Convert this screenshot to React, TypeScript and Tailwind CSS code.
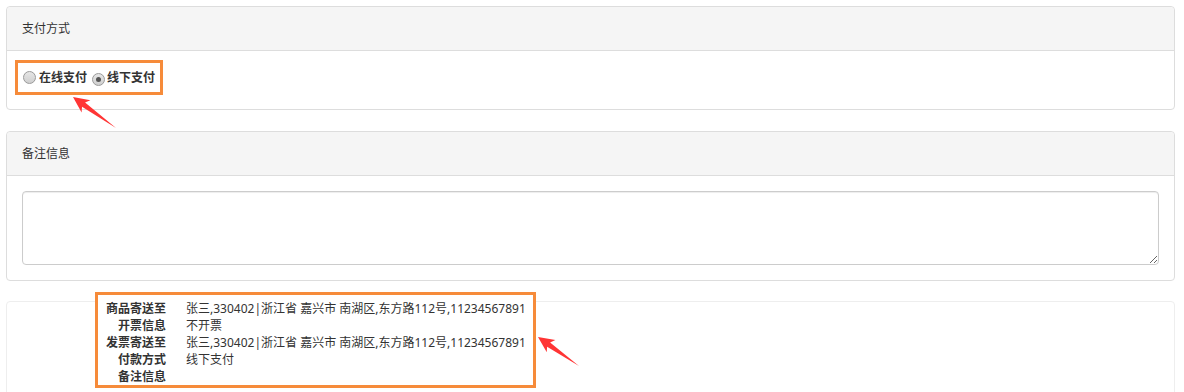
import React from "react";

const FONT = '"Noto Sans", "Noto Sans CJK SC", sans-serif';

function Radio({ checked }: { checked?: boolean }) {
  return (
    <span className="inline-flex h-[13px] w-[13px] shrink-0 items-center justify-center rounded-full border border-[#9a9a9a] bg-gradient-to-b from-[#e6e6e6] to-[#cfcfcf]">
      {checked && <span className="h-[5px] w-[5px] rounded-full bg-[#555]" />}
    </span>
  );
}

function Arrow({ tail, tip }: { tail: [number, number]; tip: [number, number] }) {
  const dx = tip[0] - tail[0];
  const dy = tip[1] - tail[1];
  const L = Math.sqrt(dx * dx + dy * dy);
  const ang = (Math.atan2(dy, dx) * 180) / Math.PI;
  const pts = `0,0 ${L - 13},-2.6 ${L - 16},-7.5 ${L},0 ${L - 16},7.5 ${L - 13},2.6`;
  return (
    <polygon
      points={pts}
      fill="#ff3535"
      transform={`translate(${tail[0]} ${tail[1]}) rotate(${ang})`}
    />
  );
}

const rows: [string, string][] = [
  ["商品寄送至", "张三,330402|浙江省 嘉兴市 南湖区,东方路112号,11234567891"],
  ["开票信息", "不开票"],
  ["发票寄送至", "张三,330402|浙江省 嘉兴市 南湖区,东方路112号,11234567891"],
  ["付款方式", "线下支付"],
  ["备注信息", ""],
];

export default function App() {
  return (
    <div
      className="relative h-[392px] w-[1184px] overflow-hidden bg-white text-[12px] text-[#333]"
      style={{ fontFamily: FONT }}
    >
      <div className="w-[1175px] pl-[6px] pt-[6px]">
        {/* Panel 1 */}
        <div className="rounded-[4px] border border-[#dddddd] bg-white">
          <div className="flex h-[44px] items-center rounded-t-[4px] border-b border-[#dddddd] bg-[#f5f5f5] px-[15px]">
            支付方式
          </div>
          <div className="pb-[14px] pl-[8px] pt-[9px]">
            <div className="flex h-[35px] w-[148px] items-center border-[3px] border-[#f68b3a] pl-[5px] font-bold">
              <Radio />
              <span className="ml-[3px] leading-none">在线支付</span>
              <span className="ml-[5px]">
                <Radio checked />
              </span>
              <span className="ml-[2px] leading-none">线下支付</span>
            </div>
          </div>
        </div>

        {/* Panel 2 */}
        <div className="mt-[21px] rounded-[4px] border border-[#dddddd] bg-white">
          <div className="flex h-[44px] items-center rounded-t-[4px] border-b border-[#dddddd] bg-[#f5f5f5] px-[15px]">
            备注信息
          </div>
          <div className="p-[15px]">
            <textarea className="block h-[74px] w-full rounded-[4px] border border-[#cccccc] shadow-[inset_0_1px_1px_rgba(0,0,0,0.075)] outline-none" />
          </div>
        </div>

        {/* Panel 3 with summary */}
        <div className="relative mt-[20px] h-[120px] rounded-[4px] border border-[#eeeeee]">
          <div className="absolute left-[88px] top-[-10px] w-[441px] border-[3px] border-[#f68b3a] bg-white pb-[0px] pl-[8px] pt-[5px]">
            {rows.map(([k, v]) => (
              <div key={k} className="flex h-[17px] items-center leading-[17px]">
                <span className="w-[60px] text-right font-bold">{k}</span>
                <span className="ml-[20px] whitespace-nowrap">{v}</span>
              </div>
            ))}
          </div>
        </div>
      </div>

      <svg
        className="pointer-events-none absolute left-0 top-0"
        width={1184}
        height={392}
        viewBox="0 0 1184 392"
      >
        <Arrow tail={[116, 128]} tip={[73, 97]} />
        <Arrow tail={[579, 366]} tip={[538, 337]} />
      </svg>
    </div>
  );
}
